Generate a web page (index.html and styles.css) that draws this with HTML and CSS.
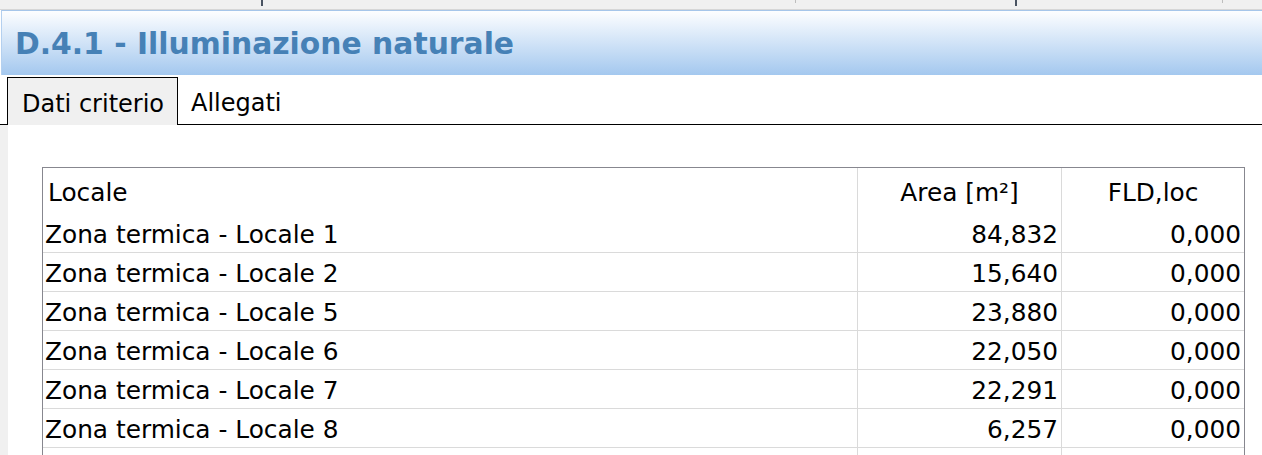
FILE: index.html
```html
<!DOCTYPE html>
<html lang="it">

<head>
    <meta charset="UTF-8">
    <meta name="viewport" content="width=device-width, initial-scale=1.0">
    <title>D.4.1 - Illuminazione naturale</title>
    <link rel="stylesheet" href="styles.css">
</head>

<body>
    <!-- barra superiore -->
    <div class="topbar">
        <span class="tick dark t1"></span>
        <span class="tick light t2"></span>
        <span class="tick dark t3"></span>
        <span class="tick light t4"></span>
    </div>

    <div class="header">
        <h1 class="title">D.4.1 - Illuminazione naturale</h1>
    </div>

    <!-- schede -->
    <div class="tabs">
        <div class="tab active">Dati criterio</div>
        <div class="tab">Allegati</div>
    </div>

    <div class="content">
        <div class="side"></div>
        <div class="panel">
            <div class="grid">
                <div class="row head">
                    <div class="cell c1">Locale</div>
                    <div class="cell c2">Area [m²]</div>
                    <div class="cell c3">FLD,loc</div>
                </div>
                <div class="row">
                    <div class="cell c1">Zona termica - Locale 1</div>
                    <div class="cell c2">84,832</div>
                    <div class="cell c3">0,000</div>
                </div>
                <div class="row">
                    <div class="cell c1">Zona termica - Locale 2</div>
                    <div class="cell c2">15,640</div>
                    <div class="cell c3">0,000</div>
                </div>
                <div class="row">
                    <div class="cell c1">Zona termica - Locale 5</div>
                    <div class="cell c2">23,880</div>
                    <div class="cell c3">0,000</div>
                </div>
                <div class="row">
                    <div class="cell c1">Zona termica - Locale 6</div>
                    <div class="cell c2">22,050</div>
                    <div class="cell c3">0,000</div>
                </div>
                <div class="row">
                    <div class="cell c1">Zona termica - Locale 7</div>
                    <div class="cell c2">22,291</div>
                    <div class="cell c3">0,000</div>
                </div>
                <div class="row">
                    <div class="cell c1">Zona termica - Locale 8</div>
                    <div class="cell c2">6,257</div>
                    <div class="cell c3">0,000</div>
                </div>
                <div class="row">
                    <div class="cell c1"></div>
                    <div class="cell c2"></div>
                    <div class="cell c3"></div>
                </div>
            </div>
        </div>
    </div>
</body>

</html>
```

FILE: styles.css
```css
html,
body {
    height: 100%;
}

body {
    margin: 0;
    background: #fff;
    font-family: "DejaVu Sans", Verdana, sans-serif;
    color: #000;
    overflow: hidden;
}

/* barra in alto */
.topbar {
    height: 9px;
    background: #f0f0f0;
    border-bottom: 1px solid #d6d6d6;
    display: flex;
    align-items: flex-start;
}

.tick {
    display: block;
}

.tick.dark {
    width: 2px;
    height: 6px;
    background: #4a5462;
}

.tick.light {
    width: 1px;
    height: 3px;
    background: #bdbdbd;
}

.t1 {
    margin-left: 261px;
}

.t2 {
    margin-left: 532px;
}

.t3 {
    margin-left: 219px;
}

.t4 {
    margin-left: 205px;
}

/* intestazione */
.header {
    height: 64px;
    border-top: 1px solid #a6c6ea;
    border-left: 1px solid #b4d0ef;
    margin-left: 1px;
    background: linear-gradient(#fdfeff, #a4c8ef);
    display: flex;
    align-items: center;
}

.title {
    margin: 0 0 0 13px;
    font-size: 29.8px;
    font-weight: bold;
    color: #4681b6;
}

/* schede */
.tabs {
    height: 49px;
    display: flex;
    align-items: flex-end;
    border-bottom: 1px solid #000;
}

.tab {
    height: 47px;
    font-size: 24px;
    display: flex;
    align-items: center;
    padding: 4px 12px 0 13px;
    box-sizing: border-box;
}

.tab.active {
    margin-left: 7px;
    width: 171px;
    padding-left: 14px;
    border: 1px solid #000;
    border-bottom: none;
    background: #f0f0f0;
    margin-bottom: -1px;
    height: 48px;
}

.content {
    display: flex;
    height: 330px;
    overflow: hidden;
}

.side {
    width: 8px;
    background: #f0f0f0;
}

.panel {
    padding: 42px 0 0 34px;
}

/* tabella */
.grid {
    width: 1201px;
    border: 1px solid #87878f;
    border-bottom: none;
    font-size: 24.8px;
}

.row {
    display: flex;
    height: 38px;
    border-bottom: 1px solid #dadada;
}

.row.head {
    height: 46px;
    border-bottom: none;
}

.cell {
    display: flex;
    align-items: center;
    padding-top: 2px;
    box-sizing: border-box;
    white-space: nowrap;
}

.c1 {
    width: 814px;
    padding-left: 2px;
}

.c2 {
    width: 204px;
    border-left: 1px solid #dadada;
    justify-content: flex-end;
    padding-right: 3px;
}

.c3 {
    width: 183px;
    border-left: 1px solid #dadada;
    justify-content: flex-end;
    padding-right: 3px;
}

.head .c1 {
    padding-left: 5px;
}

.head .c2,
.head .c3 {
    justify-content: center;
    padding-right: 0;
}
```
